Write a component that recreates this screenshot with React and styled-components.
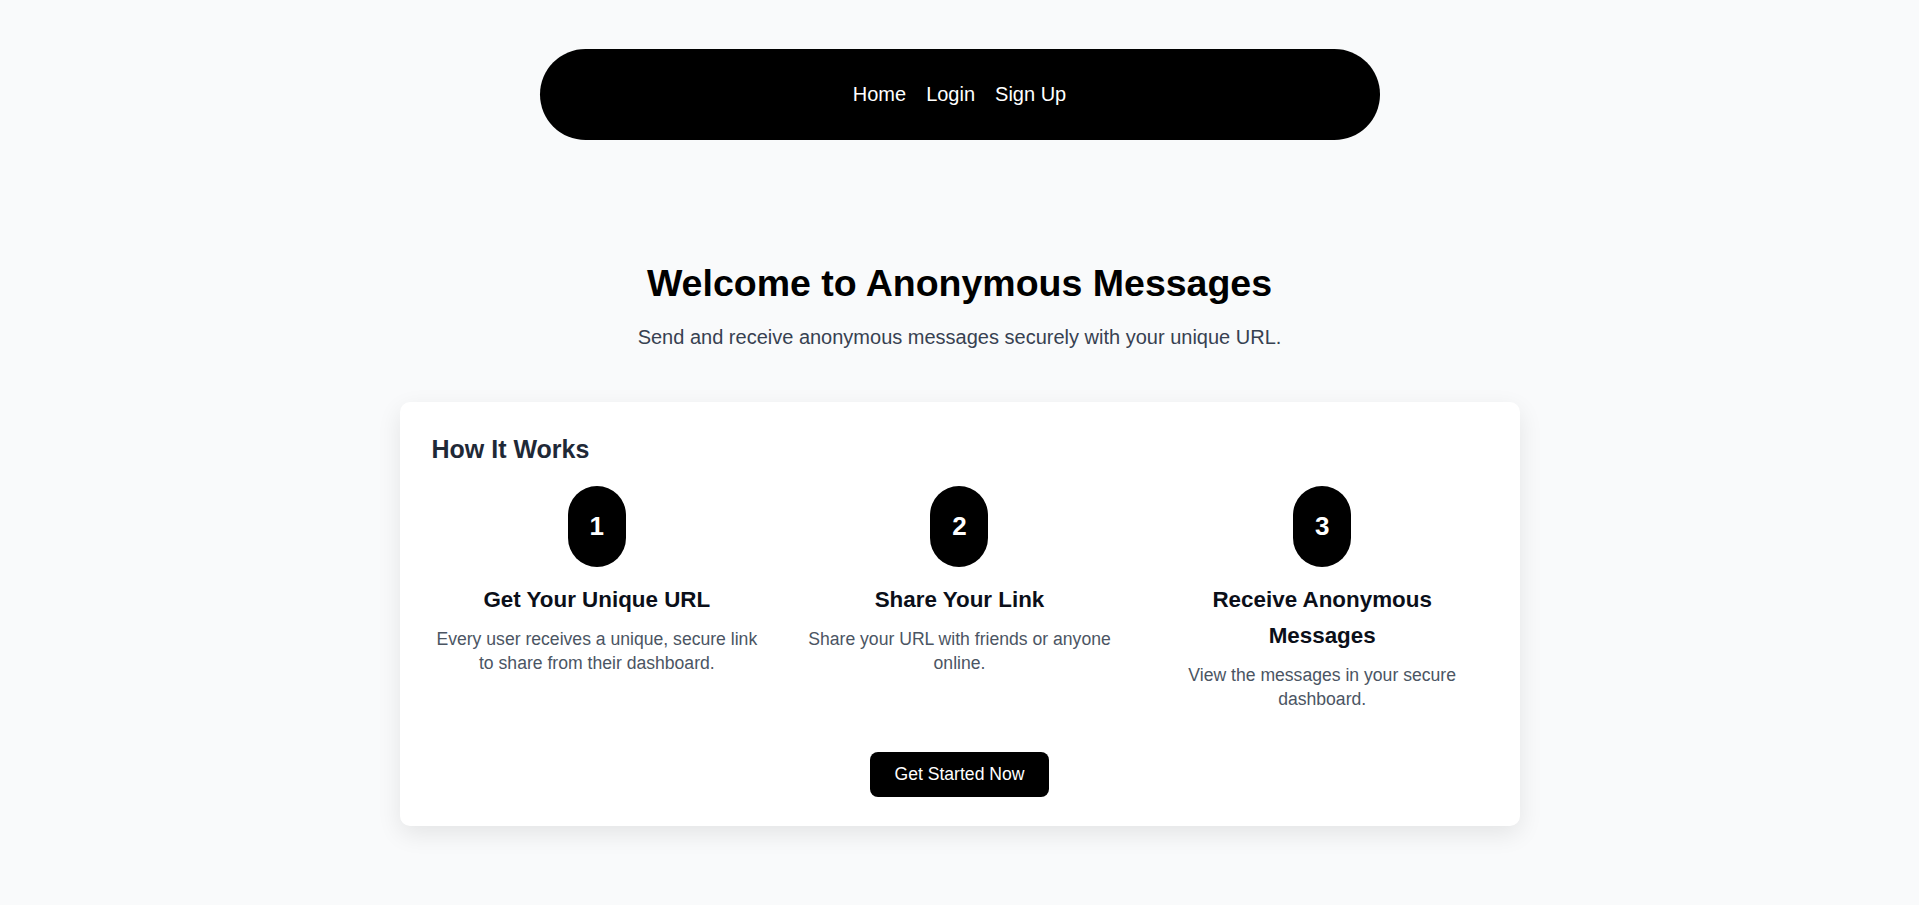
import React from 'react';
import styled, { createGlobalStyle } from 'styled-components';

const GlobalStyle = createGlobalStyle`
  body {
    margin: 0;
    background-color: #f9fafb;
    font-family: "Liberation Sans", Arial, sans-serif;
  }
`;

const Page = styled.div`
  min-height: 905px;
  padding-top: 49px;
  box-sizing: border-box;
  display: flex;
  flex-direction: column;
  align-items: center;
`;

const NavBar = styled.nav`
  width: 840px;
  height: 91px;
  background-color: #000;
  border-radius: 9999px;
  display: flex;
  justify-content: center;
  align-items: center;
  gap: 20px;
`;

const NavLink = styled.a`
  color: #fff;
  font-size: 20px;
  text-decoration: none;
  cursor: pointer;
`;

const Hero = styled.section`
  margin-top: 121px;
  text-align: center;
`;

const Title = styled.h1`
  margin: 0;
  font-size: 37.5px;
  line-height: 1.2;
  font-weight: 700;
  color: #000;
`;

const Subtitle = styled.p`
  margin: 16px 0 0;
  font-size: 20px;
  line-height: 1.5;
  color: #374151;
`;

const Card = styled.div`
  width: 1120px;
  margin-top: 50px;
  padding: 32px 32px 29px;
  box-sizing: border-box;
  background-color: #fff;
  border-radius: 10px;
  box-shadow: 0 8px 24px rgba(0, 0, 0, 0.09);
  display: flex;
  flex-direction: column;
  align-items: center;
`;

const CardTitle = styled.h2`
  align-self: stretch;
  margin: 0;
  font-size: 25px;
  line-height: 1.2;
  font-weight: 700;
  color: #1f2937;
`;

const Steps = styled.div`
  align-self: stretch;
  margin-top: 22px;
  display: grid;
  grid-template-columns: repeat(3, 1fr);
  gap: 32px;
`;

const Step = styled.div`
  display: flex;
  flex-direction: column;
  align-items: center;
  text-align: center;
`;

const Badge = styled.div`
  width: 58px;
  height: 81px;
  border-radius: 9999px;
  background-color: #000;
  color: #fff;
  font-size: 26px;
  font-weight: 700;
  display: flex;
  justify-content: center;
  align-items: center;
`;

const StepTitle = styled.h3`
  margin: 15px 0 0;
  font-size: 22.4px;
  line-height: 1.6;
  font-weight: 700;
  color: #0b0f19;
`;

const StepText = styled.p`
  margin: 9px 0 0;
  font-size: 17.6px;
  line-height: 1.4;
  color: #4b5563;
`;

const StartButton = styled.button`
  margin-top: 40px;
  padding: 12px 24px;
  border: none;
  border-radius: 8px;
  background-color: #000;
  color: #fff;
  font-family: inherit;
  font-size: 17.6px;
  line-height: 1.2;
  cursor: pointer;
`;

const steps = [
  { n: 1, title: 'Get Your Unique URL', text: 'Every user receives a unique, secure link to share from their dashboard.' },
  { n: 2, title: 'Share Your Link', text: 'Share your URL with friends or anyone online.' },
  { n: 3, title: 'Receive Anonymous Messages', text: 'View the messages in your secure dashboard.' },
];

const App = () => {
  return (
    <>
      <GlobalStyle />
      <Page>
        <NavBar>
          <NavLink>Home</NavLink>
          <NavLink>Login</NavLink>
          <NavLink>Sign Up</NavLink>
        </NavBar>
        <Hero>
          <Title>Welcome to Anonymous Messages</Title>
          <Subtitle>Send and receive anonymous messages securely with your unique URL.</Subtitle>
        </Hero>
        <Card>
          <CardTitle>How It Works</CardTitle>
          <Steps>
            {steps.map((s) => (
              <Step key={s.n}>
                <Badge>{s.n}</Badge>
                <StepTitle>{s.title}</StepTitle>
                <StepText>{s.text}</StepText>
              </Step>
            ))}
          </Steps>
          <StartButton>Get Started Now</StartButton>
        </Card>
      </Page>
    </>
  );
};

export default App;
